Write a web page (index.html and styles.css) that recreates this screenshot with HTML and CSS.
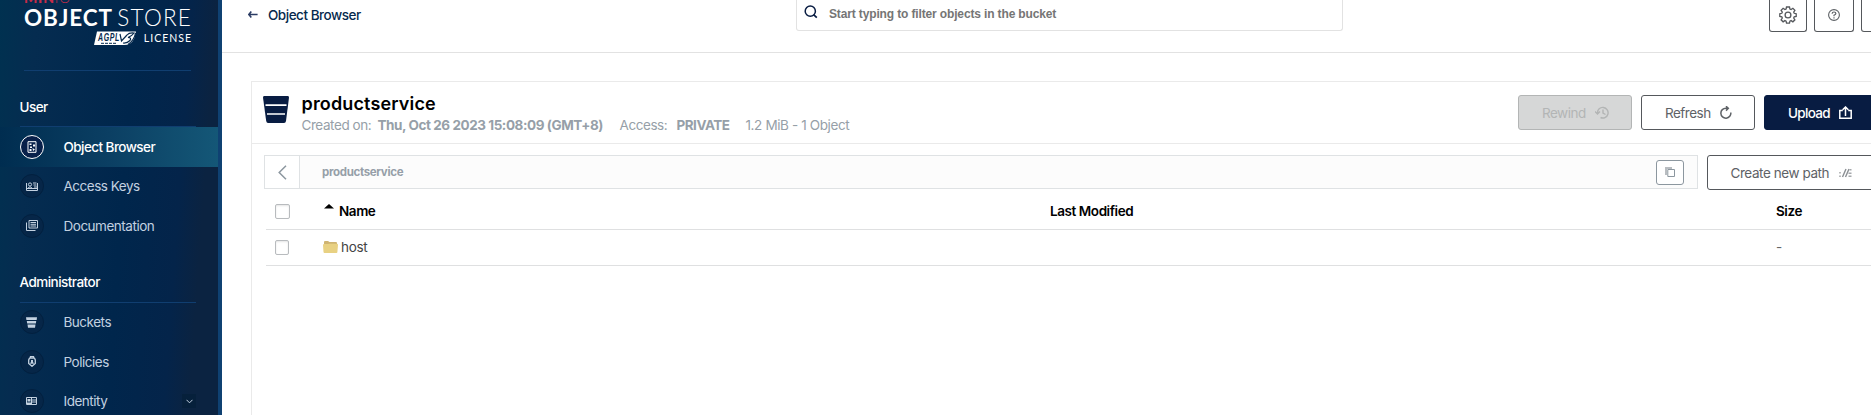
FILE: index.html
```html
<!DOCTYPE html>
<html lang="en">
<head>
<meta charset="utf-8">
<title>Object Browser</title>
<link rel="stylesheet" href="styles.css">
</head>
<body>
<div class="app">
  <aside class="sidebar">
    <div class="logo">
      <div class="brand"><b>MIN</b><span>IO</span></div>
      <div class="product"><b>OBJECT</b><span>STORE</span></div>
      <div class="license">
        <svg class="agpl" width="43" height="15" viewBox="0 0 43 15"><path d="M3 .5H42L40 8Q37 14 30 14H0Z" fill="#fff"/><text x="4" y="10" textLength="22" lengthAdjust="spacingAndGlyphs" font-family="Liberation Sans" font-size="10.500" font-weight="700" font-style="italic" fill="#06294d">AGPL</text><path d="M7 12.300H22" stroke="#06294d" stroke-width="1" stroke-dasharray="3 1"/><path d="M26 3 27.500 10 33 4M33 4Q35 1.500 40 2Q38 5 34 6.500Q38 6.500 36 9.500Q33 12.500 29 12M41.500 2Q40.500 9 34 13.500" fill="none" stroke="#06294d" stroke-width="1.200"/></svg>
        <span>LICENSE</span>
      </div>
    </div>
    <nav class="menu">
      <h2 class="group">User</h2>
      <a class="item active"><i class="disc"><svg width="10" height="12" viewBox="0 0 10 12"><path d="M1 .7H9V11.300H1Z" fill="none" stroke="currentColor"/><path d="M2.500 2.500h2v1.500h-2zM6 3.500h2v2h-2zM3 5.500h2v1.500H3zM2.500 8h2v2h-2zM5.500 7l2.500 1.500-2 1.500z" fill="currentColor"/></svg></i><span>Object Browser</span></a>
      <a class="item"><i class="disc"><svg width="12" height="9" viewBox="0 0 12 9"><path d="M.5 1V8.500H11.500V1M.5 6.500h11" fill="none" stroke="currentColor"/><circle cx="4" cy="2.500" r="1.600" fill="none" stroke="currentColor"/><path d="M2 6Q4 3.500 6 6M7 1h3.500M7.500 3h3M8 5h3" fill="none" stroke="currentColor"/></svg></i><span>Access Keys</span></a>
      <a class="item"><i class="disc"><svg width="12" height="11" viewBox="0 0 12 11"><path d="M3 .5H11.500V8H3ZM.5 2.500V10.500H9.500M4.500 2.500H10M4.500 4.300H10M4.500 6H10" fill="none" stroke="currentColor"/></svg></i><span>Documentation</span></a>
      <h2 class="group admin">Administrator</h2>
      <a class="item"><i class="disc"><svg width="11" height="11" viewBox="0 0 11 11"><path d="M0 .3H11L10.700 3H.4ZM.8 4H10.200L9.900 6.500H1.200ZM1.500 7.500H9.500L9 10.700H2Z" fill="currentColor"/></svg></i><span>Buckets</span></a>
      <a class="item"><i class="disc"><svg width="8" height="11" viewBox="0 0 8 11"><path d="M2.500 2V.6H5.500V2M1.500 2.200H6.500L7.300 4V7.500L4 10.300.7 7.500V4Z" fill="none" stroke="currentColor" stroke-width="1.300"/><path d="M3 4h2v1.800l1 2H2l1-2z" fill="currentColor"/></svg></i><span>Policies</span></a>
      <a class="item"><i class="disc"><svg width="11" height="8" viewBox="0 0 11 8"><path d="M.5.500H10.500V7.500H.5ZM6 3H10M6 5H10M5.500.5V7.500" fill="none" stroke="currentColor"/><path d="M1.500 2h3v2.500h-3zM1 5.500h4V7H1z" fill="currentColor"/></svg></i><span>Identity</span><em class="expand"><svg width="7" height="5" viewBox="0 0 7 5"><path d="M.5.800 3.500 3.800 6.500.8" fill="none" stroke="currentColor"/></svg></em></a>
    </nav>
  </aside>
  <main class="content">
    <header class="topbar">
      <div class="back">
        <svg width="10" height="7" viewBox="0 0 10 7"><path d="M3.300.600.9 3.500 3.300 6.400M1 3.500H9.600" fill="none" stroke="#2a3b63" stroke-width="1.600"/></svg>
        <span>Object Browser</span>
      </div>
      <div class="search">
        <svg width="14" height="14" viewBox="0 0 14 14"><circle cx="6.300" cy="6.200" r="5.100" fill="none" stroke="#081c42" stroke-width="1.500"/><path d="M9.600 9.700 12.800 12.600" stroke="#081c42" stroke-width="1.800"/></svg>
        <span>Start typing to filter objects in the bucket</span>
      </div>
      <div class="tools">
        <button class="tool gear"><svg width="18" height="18" viewBox="0 0 18 18"><path d="M7.500 1h3l.4 2 1.200.5 1.800-1.200 2 2-1.200 1.800.5 1.200 2 .4v2.700l-2 .4-.5 1.200 1.200 1.800-2 2-1.800-1.200-1.200.5-.4 2h-3l-.4-2-1.200-.5-1.800 1.200-2-2 1.200-1.800-.5-1.200-2-.4V7.700l2-.4.5-1.200L2.100 4.300l2-2 1.800 1.200L7.100 3Z" fill="none" stroke="#55585c" stroke-width="1.300"/><circle cx="9" cy="9" r="2.900" fill="none" stroke="#55585c" stroke-width="1.300"/></svg></button>
        <button class="tool help"><svg width="12" height="12" viewBox="0 0 12 12"><circle cx="6" cy="6" r="5.400" fill="none" stroke="#5e6266" stroke-width="1.100"/><path d="M4.100 4.700Q4.200 3 6 3T7.900 4.600Q7.900 5.600 6 6.200V7.300M6 8.200V9.500" fill="none" stroke="#5e6266" stroke-width="1.200"/></svg></button>
        <button class="tool more"></button>
      </div>
    </header>
    <section class="panel">
      <div class="panel-head">
        <svg class="bucket" width="26" height="27" viewBox="0 0 26 27"><path d="M1 0H25Q26 0 26 1.500L23 25Q22.700 27 21 27H5Q3.500 27 3.200 25L0 1.500Q0 0 1 0Z" fill="#081c42"/><path d="M2.500 9.200H23.500M4 18H22" stroke="#fff" stroke-width="1.700"/></svg>
        <div class="info">
          <h1>productservice</h1>
          <p><span class="created">Created on:</span><b class="date">Thu, Oct 26 2023 15:08:09 (GMT+8)</b><span class="access">Access:</span><b class="private">PRIVATE</b><span class="usage">1.2 MiB - 1 Object</span></p>
        </div>
        <div class="actions">
          <button class="btn disabled"><span>Rewind</span><svg width="14" height="13" viewBox="0 0 14 13"><path d="M2.500 7A5.300 5.300 0 1 1 5.500 11.500M0 5.500 2.500 8 5 5.500M8 3.500V7L10.500 8.500" fill="none" stroke="currentColor" stroke-width="1.400"/></svg></button>
          <button class="btn"><span>Refresh</span><svg width="12" height="13" viewBox="0 0 12 13"><path d="M10.800 6.500A5 5 0 1 1 6 2.200H8M6 .2 8.300 2.300 6 4.600" fill="none" stroke="currentColor" stroke-width="1.500"/></svg></button>
          <button class="btn primary"><span>Upload</span><svg width="13" height="13" viewBox="0 0 13 13"><path d="M3.800 4.500H.8V12.200H12.200V4.500H9.200M6.500 10V1.200M3.700 3.800 6.500 1 9.300 3.800" fill="none" stroke="currentColor" stroke-width="1.500"/></svg></button>
        </div>
      </div>
      <div class="pathbar">
        <div class="crumbs">
          <div class="up"><svg width="9" height="15" viewBox="0 0 9 15"><path d="M8 .8 1.200 7.500 8 14.200" fill="none" stroke="#8c979f" stroke-width="1.500"/></svg></div>
          <b>productservice</b>
          <div class="copy"><svg width="10" height="10" viewBox="0 0 10 10"><path d="M0 0H7V2H2V8H0Z" fill="#b9bdc1"/><path d="M2.800 2.500H9.500V9.500H2.800Z" fill="none" stroke="#8c979f"/></svg></div>
        </div>
        <button class="newpath"><span>Create new path</span><svg width="13" height="10" viewBox="0 0 13 10"><path d="M3.500 9 7 1M6.500 9 10 1" fill="none" stroke="#8b8f93" stroke-width="1.400"/><path d="M.2 4h1.600v1.500H.2zM.2 7.500h1.600V9H.2zM10.500 1h2v1.500h-2zM9.500 4.500h3V6h-3zM9.500 7.500h3V9h-3z" fill="#a5a8ab"/></svg></button>
      </div>
      <div class="table">
        <div class="row head">
          <i class="check"></i>
          <div class="name"><svg class="sort" width="10" height="5" viewBox="0 0 10 5"><path d="M0 4.500 5 0 10 4.500Z"/></svg><b>Name</b></div>
          <div class="modified"><b>Last Modified</b></div>
          <div class="size"><b>Size</b></div>
        </div>
        <div class="row">
          <i class="check"></i>
          <div class="name"><svg class="folder" width="15" height="12" viewBox="0 0 15 12"><path d="M1 3V1Q1 0 2 0H5L6.500 1H13Q14 1 14 2V5H1Z" fill="#cfb472"/><path d="M0 4Q0 3 1 3H5L6.500 2.700H14Q15 2.700 15 3.700L14.400 11Q14.300 12 13.500 12H1.500Q.6 12 .5 11Z" fill="#e8d183"/></svg><span>host</span></div>
          <div class="modified"></div>
          <div class="size"><span>-</span></div>
        </div>
      </div>
    </section>
  </main>
</div>
</body>
</html>
```
FILE: styles.css
```css
* { box-sizing: border-box; }
body { margin: 0; background: #fff; overflow: hidden; font-family: Inter, "Liberation Sans", sans-serif; font-size: 13.5px; letter-spacing: -.43px; color: #000; }
button { font: inherit; letter-spacing: inherit; margin: 0; background: #fff; }
svg { display: block; flex: none; }
span, b { white-space: nowrap; }
.app { display: flex; height: 415px; overflow: hidden; }

.sidebar { width: 222px; flex: none; height: 415px; overflow: hidden; border-right: 4px solid #0f4172; background: linear-gradient(94deg, #003150 0%, #052c50 15%, #00264c 55%, #04244a 78%, #0b2341 88%); }
.logo { height: 71px; margin: 0 27px 0 24px; border-bottom: 1px solid #103e70; color: #fff; font-family: Lato, sans-serif; }
.brand { height: 4px; display: flex; align-items: flex-end; line-height: 14px; font-size: 14px; letter-spacing: .8px; color: #c72c48; margin-bottom: 1px; }
.brand b { font-weight: 900; position: relative; top: 1px; }
.brand span { font-weight: 300; position: relative; top: 1px; }
.product { display: flex; justify-content: space-between; height: 26px; line-height: 26px; font-size: 22.5px; letter-spacing: .6px; }
.product b { letter-spacing: .9px; }
.product span { font-weight: 300; margin-right: -1px; letter-spacing: 1.2px; }
.license { display: flex; justify-content: space-between; align-items: center; height: 15px; padding-left: 70px; font-size: 10.5px; letter-spacing: 1px; }
.license span { margin: -2px -1px 0 0; }

.group { margin: 0 22px 0 19.5px; height: 56px; padding-top: 28px; line-height: 17px; font-size: 13.5px; font-weight: 500; letter-spacing: -.53px; color: #fff; border-bottom: 1px solid #103e70; }
.group.admin { height: 57px; }
.item { display: flex; align-items: center; height: 39.5px; padding: 0 22px 0 20px; color: #c3d1e0; letter-spacing: -.48px; }
.item.active { color: #fff; font-weight: 500; letter-spacing: -.56px; background: linear-gradient(90deg, #002d50, #0b3f63 50%, #145777); }
.disc { width: 24px; height: 24px; margin-right: 19.5px; border-radius: 50%; border: 1px solid #02203f; background: #062648; display: flex; align-items: center; justify-content: center; flex: none; }
.disc svg { margin-right: 1px; }
.active .disc { border-color: #fff; background: #08204a; }
.expand { margin-left: auto; width: 14px; height: 14px; background: #06203b; display: flex; align-items: center; justify-content: center; }

.content { width: 1700px; flex: none; }
.topbar { height: 53px; border-bottom: 1px solid #e2e2e2; display: flex; align-items: flex-start; }
.back { display: flex; align-items: center; width: 574px; height: 29px; padding-left: 26px; color: #06294d; font-weight: 500; letter-spacing: -.48px; }
.back span { margin-left: 10px; }
.search { width: 547px; height: 31px; border: 1px solid #e2e2e2; border-top: 0; border-radius: 0 0 3px 3px; padding: 0 0 3px 7px; display: flex; align-items: center; font-family: "Liberation Sans", sans-serif; font-size: 12px; letter-spacing: -.14px; font-weight: 700; color: #757575; }
.search span { margin-left: 11px; }
.search svg { margin-top: -3px; }
.tools { display: flex; margin-left: 426px; gap: 7px; }
.tool { width: 40px; height: 32px; padding: 0 0 2px; border: 1px solid #55585c; border-top: 0; border-radius: 0 0 3px 3px; display: flex; justify-content: center; align-items: center; flex: none; }
.tool.gear { width: 38px; }

.panel { margin: 28px 0 0 29px; height: 400px; border: 1px solid #eaeaea; border-right: 0; }
.panel-head { height: 62px; border-bottom: 1px solid #eaeaea; display: flex; }
.bucket { margin: 14px 12.5px 0 11px; }
.info { width: 1216.5px; }
.info h1 { margin: 11px 0 0; font-size: 18px; line-height: 22px; font-weight: 600; letter-spacing: .15px; }
.info p { margin: 2px 0 0; line-height: 17px; display: flex; color: #969fa8; }
.info p b { font-weight: 700; }
.created { width: 76px; }
.date { width: 242px; }
.access { width: 57px; }
.private { width: 69px; letter-spacing: -.5px; }
.usage { letter-spacing: -.38px; }
.actions { display: flex; gap: 9px; padding-top: 13px; }
.btn { width: 114px; height: 35px; padding: 0 0 0 23px; border: 1px solid #55585c; border-radius: 3px; color: #5e6266; display: flex; align-items: center; gap: 9px; letter-spacing: -.5px; }
.btn.disabled { background: #d6d7d7; border-color: #b3b5b5; color: #b3b5b5; }
.btn.primary { width: 130px; background: #081c42; border-color: #081c42; color: #fff; font-weight: 500; letter-spacing: -.7px; }

.pathbar { display: flex; gap: 9px; padding: 11px 0 0 12px; height: 46px; }
.crumbs { width: 1434px; height: 34px; border: 1px solid #dfe2e4; background: #fcfcfc; display: flex; align-items: center; color: #969fa8; font-size: 11.5px; letter-spacing: -.33px; flex: none; }
.crumbs b { margin-top: -1px; }
.up { width: 35px; height: 32px; border-right: 1px solid #dfe2e4; background: #fff; display: flex; align-items: center; justify-content: center; margin-right: 22px; }
.copy { width: 28px; height: 25px; border: 1px solid #8c979f; border-radius: 3px; margin: 0 13px 0 auto; display: flex; align-items: center; justify-content: center; background: #fff; }
.newpath { width: 190px; height: 35px; border: 1px solid #55585c; border-radius: 3px; color: #5e6266; padding: 0 0 0 22.5px; display: flex; align-items: center; gap: 10px; flex: none; }

.table { margin-left: 14px; }
.row { height: 36px; border-bottom: 1px solid #dfe0e1; display: flex; align-items: center; }
.row.head { height: 40px; padding-top: 2px; }
.row b { font-weight: 600; }
.check { width: 14px; height: 15px; margin: 0 34px 0 9px; border: 1px solid #b8bbbe; border-radius: 2px; background: #fff; box-shadow: inset 0 1px 2px #e5e5e5; flex: none; }
.head .check { width: 15px; margin: 1px 33px 0 9px; }
.name { width: 727px; display: flex; align-items: center; color: #444; }
.head .name { color: #000; }
.name span { margin: -2px 0 0 3px; letter-spacing: -.3px; }
.folder { margin-top: -1px; }
.sort { margin: -9px 5px 0 1px; }
.modified { width: 726px; }
.size span { color: #666; position: relative; top: -1px; }
```
